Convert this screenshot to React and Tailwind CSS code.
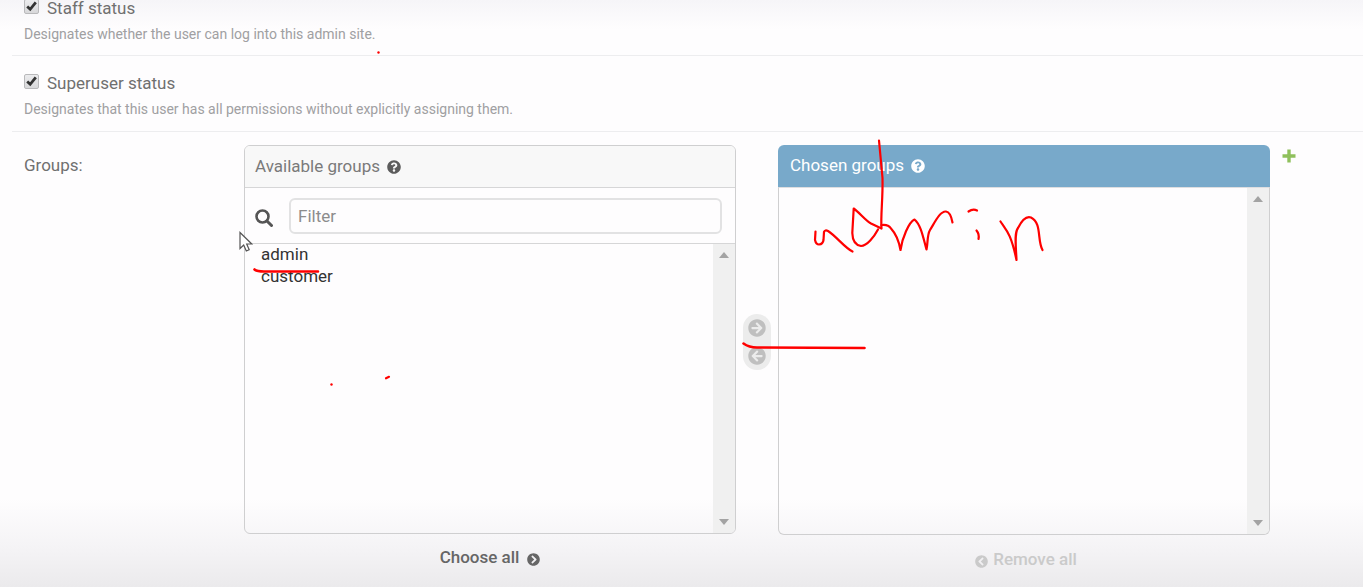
import React from "react";
import {
  FaQuestionCircle,
  FaArrowCircleRight,
  FaArrowCircleLeft,
  FaChevronCircleRight,
  FaChevronCircleLeft,
} from "react-icons/fa";

function CheckField({ id, label, help, className }) {
  return (
    <div className={"ml-3 border-b border-[#ededef] pl-3 " + className}>
      <div className="flex h-4 items-center gap-2">
        <span className="relative mb-1 block size-[15px]">
          <input
            id={id}
            type="checkbox"
            defaultChecked
            className="peer block size-[15px] appearance-none rounded-xs border border-[#b9b9bb] bg-gradient-to-b from-[#ececee] to-[#d8d8da]"
          />
          <svg
            viewBox="0 0 14 14"
            className="pointer-events-none absolute inset-0 hidden size-[15px] peer-checked:block"
            fill="none"
            stroke="#333"
            strokeWidth="2.6"
          >
            <path d="M3 7 L5.800 9.600 L11 3.200" />
          </svg>
        </span>
        <label htmlFor={id} className="text-[17px] leading-4 text-[#707070]">
          {label}
        </label>
      </div>
      <p className="mt-2 text-sm leading-5 text-[#a0a0a2]">{help}</p>
    </div>
  );
}

function ScrollStrip() {
  return (
    <div className="flex w-[22px] flex-col items-center justify-between bg-[#f0f0f0] py-2" aria-hidden="true">
      <svg viewBox="0 0 10 6" className="h-[6px] w-[10px]">
        <path d="M0 6 L5 0 L10 6 Z" fill="#a3a3a3" />
      </svg>
      <svg viewBox="0 0 10 6" className="h-[6px] w-[10px]">
        <path d="M0 0 L5 6 L10 0 Z" fill="#a3a3a3" />
      </svg>
    </div>
  );
}

const listClass =
  "block min-w-0 flex-1 appearance-none overflow-hidden border-0 bg-transparent px-4 text-[17px] text-[#333] outline-none";

function Ink() {
  return (
    <svg
      className="pointer-events-none absolute left-0 top-0 h-[587px] w-[1363px]"
      viewBox="0 0 1363 587"
      fill="none"
      stroke="#ff0000"
      strokeWidth="2.2"
      strokeLinecap="round"
      strokeLinejoin="round"
      aria-hidden="true"
    >
      <path d="M815.500 231.500 L815 240 Q816 244.500 819 244.500 Q823 244 823.500 240 L824 232 Q825 229.500 828 231 C836 236 845 248 852.500 251.500" />
      <path d="M878 229.500 C874 237 867 246 861 246 C855 245 852.500 240 852.300 233 L853.700 208.500 C860 213 865 220 871 223.500 L881.500 228.500 C880.500 215 883 200 882.500 178 L879 140.500" />
      <path d="M881.500 225 Q888 224 891 228.500 Q898 236 900.500 250 C902 238 909 222 914.500 219.500 C921 225 923 237 926.500 249.500 C928 243 927 235 930 230 C935 222 940 211 946 211.500 C950 212 951.500 217 952.500 222.500" />
      <path d="M968.500 211.500 Q973 208.500 977 210.500 M976.500 230.500 Q979.500 234 978.500 239" />
      <path d="M1000.500 221.500 C1007 231 1011 234 1016.500 260 C1016 247 1014 233 1018 228 C1022 220 1027 216 1031 217.500 C1042 223 1037 240 1042.500 250" />
      <path d="M743.500 343.500 Q749 347.500 757 347.500 L864.500 348" strokeWidth="2.600" />
      <path d="M254.500 269.500 Q257 271.500 264 271.500 L318 271.500" strokeWidth="2.600" />
      <path d="M386 378.300 L389 376.800" />
      <circle cx="331.500" cy="384.500" r="1.200" fill="#ff0000" stroke="none" />
      <circle cx="378.500" cy="52.500" r="1.200" fill="#ff0000" stroke="none" />
    </svg>
  );
}

export default function App() {
  return (
    <main className="relative min-h-screen bg-[#fefdfe] bg-[linear-gradient(to_bottom,#f6f5f8_0%,#fefdfe_5%,#fefdfe_85%,#f5f4f6_93%,#ebeaec_100%)] font-['Roboto',sans-serif]">
      <CheckField
        id="staff"
        label="Staff status"
        help="Designates whether the user can log into this admin site."
        className="pb-[11px]"
      />
      <CheckField
        id="superuser"
        label="Superuser status"
        help="Designates that this user has all permissions without explicitly assigning them."
        className="pb-3 pt-[19px]"
      />

      <div className="grid grid-cols-[220px_minmax(0,1fr)_42px_minmax(0,1fr)_93px] pl-6 pt-[13px]">
        <div className="pt-[10px] text-[17px] leading-5 text-[#707070]">Groups:</div>

        <section>
          <div className="flex h-[389px] flex-col overflow-hidden rounded-md border border-[#cfcfd0]">
            <h2 className="flex h-[42px] shrink-0 items-center gap-[7px] border-b border-[#d6d6d7] bg-[#f8f8f8] px-[10px] text-[17px] text-[#7a7a7a]">
              <label htmlFor="available">Available groups</label>
              <FaQuestionCircle className="size-[14px] text-[#5c5c5c]" />
            </h2>
            <div className="flex h-14 shrink-0 items-center gap-4 border-b border-[#d6d6d7] pl-[10px] pr-[13px]">
              <label htmlFor="filter" aria-label="Filter">
                <svg viewBox="0 0 18 18" className="mt-1 size-[18px]" fill="none" stroke="#555" strokeWidth="2.6">
                  <circle cx="7.500" cy="7.500" r="6" />
                  <path d="M12 12 L16.500 16.500" strokeWidth="3" strokeLinecap="round" />
                </svg>
              </label>
              <input
                id="filter"
                type="text"
                placeholder="Filter"
                className="h-9 min-w-0 flex-1 rounded-md border-2 border-[#e2e2e3] bg-transparent px-[7px] text-[17px] outline-none placeholder:text-[#8c8c8c]"
              />
            </div>
            <div className="flex min-h-0 flex-1">
              <select id="available" multiple className={listClass}>
                <option className="h-[22px] p-0 leading-5">admin</option>
                <option className="h-[22px] p-0 leading-5">customer</option>
              </select>
              <ScrollStrip />
            </div>
          </div>
          <div className="flex justify-center pt-[13px]">
            <button type="button" className="flex items-center gap-2 text-[17px] font-medium leading-5 text-[#666]">
              Choose all
              <FaChevronCircleRight className="mt-1 size-[13px]" />
            </button>
          </div>
        </section>

        <div className="flex flex-col items-center pt-[169px]">
          <div className="flex h-14 w-7 flex-col items-center justify-between rounded-full bg-[#ececec] py-[5px] text-[#bfbfbf]">
            <button type="button" aria-label="Choose">
              <FaArrowCircleRight className="size-[18px]" />
            </button>
            <button type="button" aria-label="Remove">
              <FaArrowCircleLeft className="size-[18px]" />
            </button>
          </div>
        </div>

        <section>
          <div className="flex h-[390px] flex-col">
            <h2 className="flex h-[42px] shrink-0 items-center gap-[7px] rounded-t-md bg-[#78a9ca] px-3 text-[17px] text-white">
              <label htmlFor="chosen">Chosen groups</label>
              <FaQuestionCircle className="size-[14px]" />
            </h2>
            <div className="flex min-h-0 flex-1 overflow-hidden rounded-b-md border border-[#cfcfd0] border-t-[#dedee0]">
              <select id="chosen" multiple className={listClass} />
              <ScrollStrip />
            </div>
          </div>
          <div className="flex justify-center pl-1 pt-[14px]">
            <button type="button" className="flex items-center gap-[5px] text-[17px] font-medium leading-5 text-[#cacaca]">
              <FaChevronCircleLeft className="mt-1 size-[13px]" />
              Remove all
            </button>
          </div>
        </section>

        <div className="pl-3 pt-1">
          <button type="button" aria-label="Add group" className="block">
            <svg viewBox="0 0 14 14" className="size-[14px]" fill="none" stroke="#8fc05c" strokeWidth="3.400">
              <path d="M7 0.500 V13.500 M0.500 7 H13.500" />
            </svg>
          </button>
        </div>
      </div>

      <svg
        className="pointer-events-none absolute left-[239px] top-[231px] h-[21px] w-[14px]"
        viewBox="0 0 14 21"
        fill="#fff"
        stroke="#555"
        strokeWidth="1.200"
        aria-hidden="true"
      >
        <path d="M1 1.500 V17.500 L4.700 14 L7.300 20 L10.200 18.700 L7.700 13 H12.800 Z" />
      </svg>
      <Ink />
    </main>
  );
}
